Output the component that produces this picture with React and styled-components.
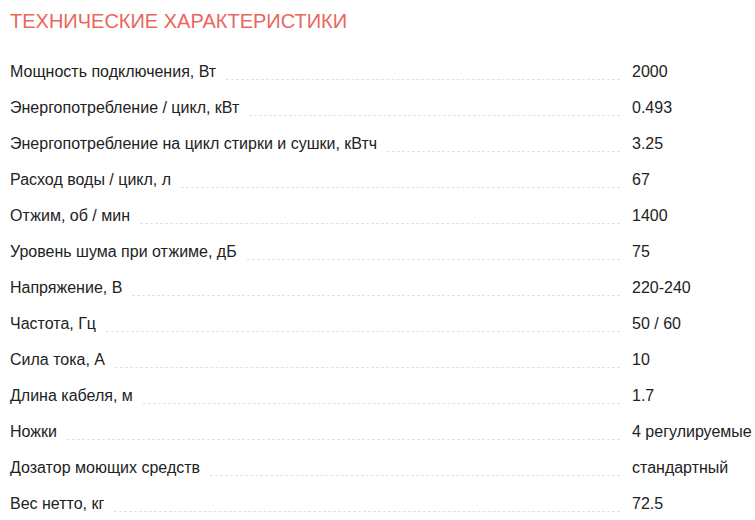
import React from 'react'
import styled, { createGlobalStyle } from 'styled-components'

const GlobalStyle = createGlobalStyle`
  body {
    margin: 0;
    background: #fff;
    font-family: "Liberation Sans", Arial, sans-serif;
  }
`

const Wrapper = styled.section`
  padding: 8px 10px;
  width: 755px;
  box-sizing: border-box;
`

const Title = styled.h2`
  margin: 0 0 20px;
  font-size: 20px;
  line-height: 26px;
  font-weight: 400;
  color: #e9675c;
  text-transform: uppercase;
`

const List = styled.dl`
  margin: 0;
`

const Row = styled.div`
  display: grid;
  grid-template-columns: 610px 1fr;
  column-gap: 12px;
  height: 36px;
  align-items: center;
  font-size: 16px;
  line-height: 20px;
  color: #222;
`

const Term = styled.dt`
  display: flex;
  align-items: flex-end;
  margin: 0;
  height: 20px;
`

const Label = styled.span`
  white-space: nowrap;
`

const Leader = styled.span`
  flex: 1;
  margin: 0 0 2px 10px;
  border-bottom: 1px dashed #e2e2e2;
`

const Value = styled.dd`
  margin: 0;
  white-space: nowrap;
`

const specs = [
  ['Мощность подключения, Вт', '2000'],
  ['Энергопотребление / цикл, кВт', '0.493'],
  ['Энергопотребление на цикл стирки и сушки, кВтч', '3.25'],
  ['Расход воды / цикл, л', '67'],
  ['Отжим, об / мин', '1400'],
  ['Уровень шума при отжиме, дБ', '75'],
  ['Напряжение, В', '220-240'],
  ['Частота, Гц', '50 / 60'],
  ['Сила тока, А', '10'],
  ['Длина кабеля, м', '1.7'],
  ['Ножки', '4 регулируемые'],
  ['Дозатор моющих средств', 'стандартный'],
  ['Вес нетто, кг', '72.5'],
]

const App = () => (
  <>
    <GlobalStyle />
    <Wrapper>
      <Title>Технические характеристики</Title>
      <List>
        {specs.map(([name, value]) => (
          <Row key={name}>
            <Term>
              <Label>{name}</Label>
              <Leader />
            </Term>
            <Value>{value}</Value>
          </Row>
        ))}
      </List>
    </Wrapper>
  </>
)

export default App
